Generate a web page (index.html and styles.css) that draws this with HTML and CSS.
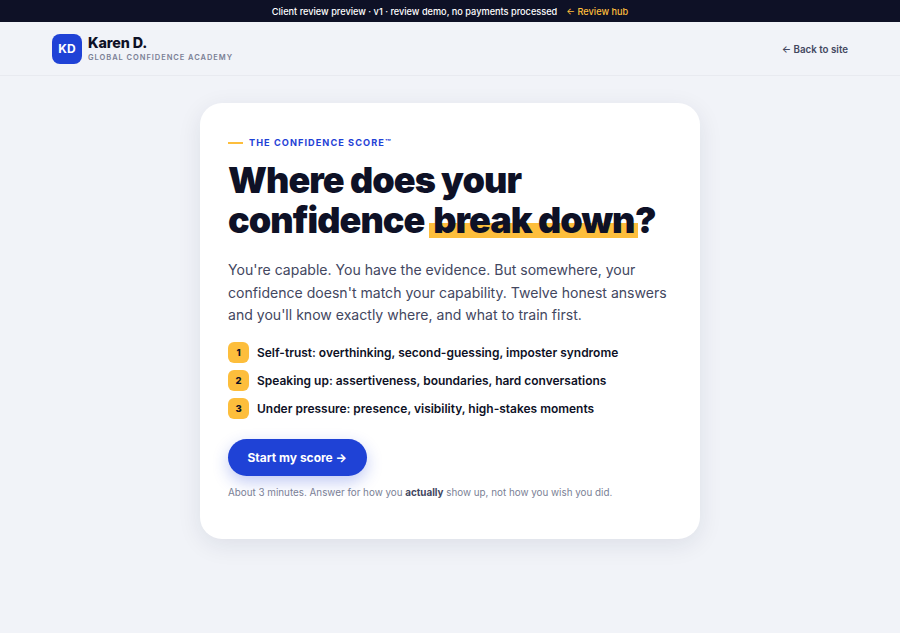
FILE: index.html
```html
<!DOCTYPE html>
<html lang="en">
<head>
<meta charset="utf-8">
<title>The Confidence Score</title>
<link rel="stylesheet" href="styles.css">
</head>
<body>
<div class="topbar"><span>Client review preview · v1 · review demo, no payments processed</span><a class="hub" href="#">← Review hub</a></div>
<header class="site-head">
  <div class="brand">
    <div class="logo">KD</div>
    <div class="brand-text">
      <div class="brand-name">Karen D.</div>
      <div class="brand-sub">GLOBAL CONFIDENCE ACADEMY</div>
    </div>
  </div>
  <a class="back" href="#">← Back to site</a>
</header>
<main class="main">
  <section class="card">
    <div class="eyebrow"><span class="dash"></span>THE CONFIDENCE SCORE™</div>
    <h1>Where does your<br>confidence <span class="mark">break down</span>?</h1>
    <p class="lead">You're capable. You have the evidence. But somewhere, your confidence doesn't match your capability. Twelve honest answers and you'll know exactly where, and what to train first.</p>
    <ul class="list">
      <li><span class="num">1</span>Self-trust: overthinking, second-guessing, imposter syndrome</li>
      <li><span class="num">2</span>Speaking up: assertiveness, boundaries, hard conversations</li>
      <li><span class="num">3</span>Under pressure: presence, visibility, high-stakes moments</li>
    </ul>
    <button class="cta">Start my score →</button>
    <p class="note">About 3 minutes. Answer for how you <strong>actually</strong> show up, not how you wish you did.</p>
  </section>
</main>
</body>
</html>
```
FILE: styles.css
```css
* { box-sizing: border-box; }
html, body { margin: 0; padding: 0; }
body {
  background: #f1f3f8;
  font-family: Inter, "Liberation Sans", sans-serif;
  color: #0e1126;
  height: 633px;
  overflow: hidden;
}
a { text-decoration: none; }
.topbar {
  height: 22px;
  background: #0e1126;
  color: #fff;
  font-size: 9.2px;
  font-weight: 500;
  display: flex;
  align-items: center;
  justify-content: center;
  gap: 9px;
}
.hub { color: #fdbe3c; }
.site-head {
  height: 54px;
  padding: 0 52px;
  display: flex;
  align-items: center;
  justify-content: space-between;
  border-bottom: 1px solid #e8eaf0;
}
.brand { display: flex; align-items: center; gap: 6px; }
.logo {
  width: 30px;
  height: 30px;
  border-radius: 8px;
  background: #1f42d6;
  color: #fff;
  font-weight: 700;
  font-size: 12px;
  display: flex;
  align-items: center;
  justify-content: center;
}
.brand-text { margin-bottom: 1px; }
.brand-name { font-size: 14.3px; font-weight: 800; letter-spacing: -0.1px; line-height: 18px; }
.brand-sub { font-size: 7.5px; font-weight: 600; letter-spacing: 0.95px; color: #7a7f95; line-height: 11px; }
.back { font-size: 9.75px; font-weight: 600; color: #43475f; margin-top: 1px; }
.main { display: flex; justify-content: center; padding-top: 27px; }
.card {
  width: 500px;
  height: 436px;
  background: #fff;
  border-radius: 22px;
  padding: 32px 28px;
  box-shadow: 0 6px 24px rgba(20, 28, 70, 0.09);
}
.eyebrow {
  display: flex;
  align-items: center;
  gap: 6px;
  font-size: 9.2px;
  font-weight: 700;
  letter-spacing: 1.05px;
  color: #1f42d6;
  line-height: 16px;
}
.dash { width: 15px; height: 2px; background: #fdbe3c; }
h1 {
  margin: 8.5px 0 0;
  font-size: 36px;
  line-height: 40px;
  font-weight: 900;
  letter-spacing: -0.95px;
}
.mark {
  background: linear-gradient(transparent 56%, #fdbe3c 56%, #fdbe3c 90%, transparent 90%);
  padding: 0 3.5px 0 4px;
  margin: 0 -3px 0 -1.5px;
}
.lead {
  margin: 19.5px 0 0;
  font-size: 14.07px;
  line-height: 22.5px;
  color: #43475f;
}
.list { list-style: none; margin: 15px 0 0; padding: 0; display: flex; flex-direction: column; gap: 7px; }
.list li {
  display: flex;
  align-items: center;
  gap: 8px;
  font-size: 11.97px;
  font-weight: 600;
  height: 21px;
}
.num {
  width: 21px;
  height: 21px;
  border-radius: 6px;
  background: #fdbe3c;
  font-size: 9.5px;
  font-weight: 800;
  display: flex;
  align-items: center;
  justify-content: center;
}
.cta {
  display: block;
  margin-top: 20px;
  width: 138.5px;
  height: 37px;
  border: 0;
  border-radius: 19px;
  background: #1f42d6;
  color: #fff;
  font-family: inherit;
  font-size: 12px;
  font-weight: 700;
  box-shadow: 0 6px 16px rgba(31, 66, 214, 0.28);
}
.note { margin: 9px 0 0; font-size: 9.83px; line-height: 14px; color: #7a7f95; }
.note strong { color: #43475f; font-weight: 700; }
```
